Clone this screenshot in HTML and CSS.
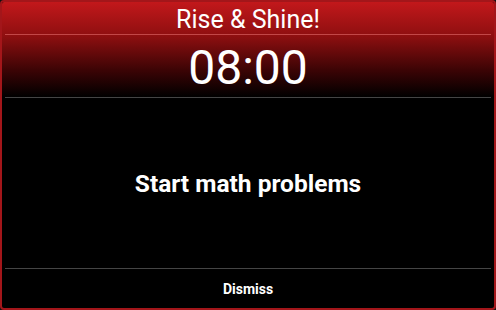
FILE: index.html
```html
<!DOCTYPE html>
<html>
<head>
<meta charset="utf-8">
<link rel="stylesheet" href="styles.css">
</head>
<body>
<div class="dialog">
  <div class="header">
    <div class="title">Rise &amp; Shine!</div>
    <div class="rule rule-light"></div>
    <div class="time">08:00</div>
    <div class="rule rule-dark"></div>
  </div>
  <div class="content">
    <div class="action">Start math problems</div>
  </div>
  <div class="rule rule-dark"></div>
  <div class="footer">
    <div class="dismiss">Dismiss</div>
  </div>
</div>
</body>
</html>
```
FILE: styles.css
```css
html, body {
  margin: 0;
  padding: 0;
  background: #111;
  width: 496px;
  height: 310px;
  overflow: hidden;
}
.dialog {
  box-sizing: border-box;
  width: 496px;
  height: 310px;
  border: 2px solid #a3161a;
  border-radius: 4px;
  background: #000;
  display: flex;
  flex-direction: column;
  font-family: Roboto, "Liberation Sans", sans-serif;
  color: #fff;
  overflow: hidden;
}
.header {
  background: linear-gradient(to bottom, #c2181b 0px, #8e0f10 34px, #3c0405 68px, #000 95px);
  display: flex;
  flex-direction: column;
}
.title {
  height: 32px;
  display: flex;
  align-items: center;
  justify-content: center;
  font-size: 25px;
  line-height: 1;
  padding-top: 2px;
  box-sizing: border-box;
}
.rule {
  height: 1px;
  margin: 0 3px;
  flex: none;
}
.rule-light {
  background: rgba(255, 140, 140, 0.45);
}
.rule-dark {
  background: #454545;
}
.time {
  height: 62px;
  display: flex;
  align-items: center;
  justify-content: center;
  font-size: 48px;
  font-weight: 400;
  line-height: 1;
  padding-top: 3px;
  box-sizing: border-box;
}
.content {
  flex: 1;
  display: flex;
  align-items: center;
  justify-content: center;
}
.action {
  font-size: 24.5px;
  font-weight: 700;
}
.footer {
  height: 39px;
  display: flex;
  align-items: center;
  justify-content: center;
}
.dismiss {
  font-size: 14px;
  font-weight: 700;
}
```
